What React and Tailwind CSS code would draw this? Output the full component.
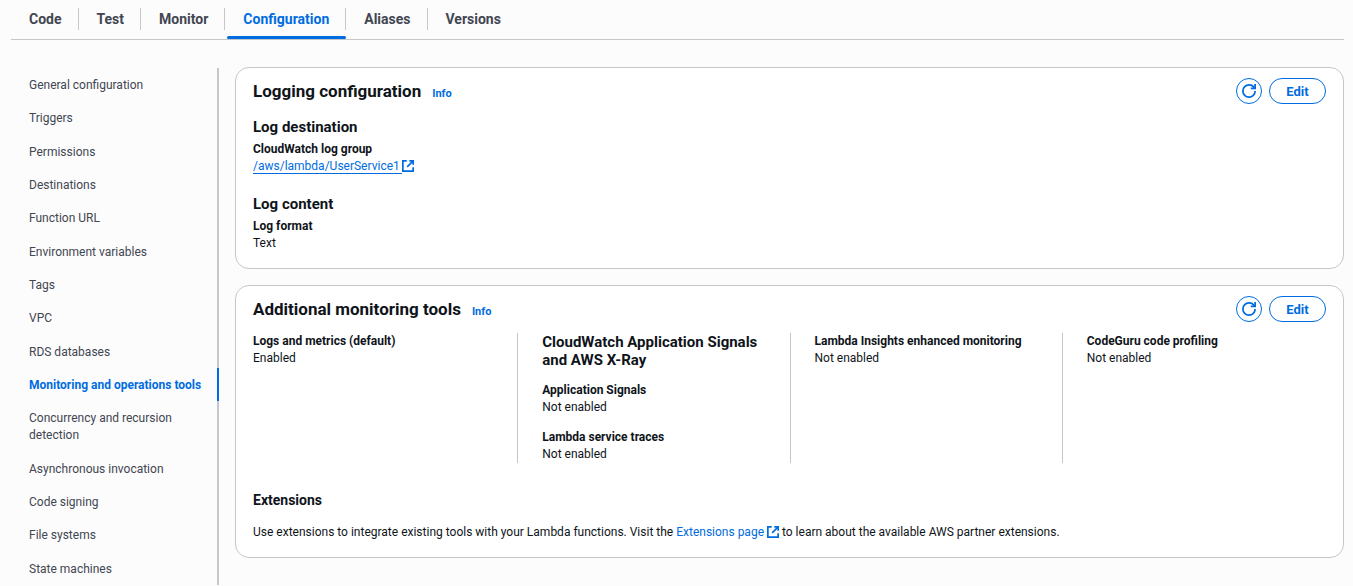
const tabs = ['Code', 'Test', 'Monitor', 'Configuration', 'Aliases', 'Versions'];

const sections = [
  'General configuration',
  'Triggers',
  'Permissions',
  'Destinations',
  'Function URL',
  'Environment variables',
  'Tags',
  'VPC',
  'RDS databases',
  'Monitoring and operations tools',
  'Concurrency and recursion detection',
  'Asynchronous invocation',
  'Code signing',
  'File systems',
  'State machines',
];

function RefreshIcon() {
  return (
    <svg viewBox="0 0 16 16" className="size-[14px]" fill="none" stroke="currentColor" strokeWidth="2" aria-hidden="true">
      <path d="M10 5h5V0" />
      <path d="M15 8a6.957 6.957 0 0 1-7 7 6.957 6.957 0 0 1-7-7 6.957 6.957 0 0 1 7-7 6.87 6.87 0 0 1 6.3 4" />
    </svg>
  );
}

function ExternalIcon() {
  return (
    <svg viewBox="1 1 14 14" className="inline size-[12px] align-[-2px]" fill="none" stroke="currentColor" strokeWidth="2" aria-hidden="true">
      <path d="M9.5 2H14v4.5" />
      <path d="m7 9 7-7" />
      <path d="M14 9.5V14H2V2h4.5" />
    </svg>
  );
}

function Tabs() {
  return (
    <div role="tablist" className="flex h-10 border-b border-[#c6c6cd]">
      {tabs.map((name) => {
        const active = name === 'Configuration';
        return (
          <div key={name} className="relative flex items-start pt-2 not-last:after:h-[22px] not-last:after:w-px not-last:after:bg-[#c6c6cd]">
            <button
              type="button"
              role="tab"
              aria-selected={active}
              className={`h-[22px] pr-4 pl-[18px] text-[14px] font-bold ${active ? 'text-[#006ce0]' : 'text-[#424650]'}`}
            >
              {name}
            </button>
            {active && <span className="absolute right-0 bottom-0 left-[2px] h-[3px] rounded-sm bg-[#006ce0]" />}
          </div>
        );
      })}
    </div>
  );
}

function SideNav() {
  return (
    <nav aria-label="Configuration sections" className="mt-px flex w-[208px] shrink-0 flex-col">
      {sections.map((name) => {
        const active = name.startsWith('Monitoring');
        return (
          <a
            key={name}
            href="#"
            className={`flex grow items-center border-r-2 pt-[9px] pr-2 pb-[7px] pl-[18px] ${
              active ? 'border-[#006ce0] font-bold whitespace-nowrap text-[#006ce0]' : 'border-[#c6c6cd] text-[#424650]'
            }`}
          >
            {name}
          </a>
        );
      })}
    </nav>
  );
}

function Card({ title, children }) {
  return (
    <section className="rounded-[14px] border border-[#c6c6cd] bg-white px-[17px] pt-[10px] pb-4">
      <header className="flex h-[26px] items-center justify-between">
        <div className="flex items-baseline gap-[11px]">
          <h2 className="text-[17px] leading-6 font-bold">{title}</h2>
          <a href="#" className="text-[11px] font-bold text-[#006ce0]">Info</a>
        </div>
        <div className="flex gap-[7px]">
          <button type="button" aria-label={`Refresh ${title}`} className="flex size-[26px] items-center justify-center rounded-full border border-[#006ce0] text-[#006ce0]">
            <RefreshIcon />
          </button>
          <button type="button" className="h-[26px] w-[57px] rounded-full border border-[#006ce0] text-[13px] font-bold text-[#006ce0]">
            Edit
          </button>
        </div>
      </header>
      {children}
    </section>
  );
}

function Field({ label, children }) {
  return (
    <dl>
      <dt className="font-bold">{label}</dt>
      <dd>{children}</dd>
    </dl>
  );
}

export default function App() {
  return (
    <div className="flex min-h-screen flex-col bg-[#fcfcfd] pr-[9px] pb-px pl-[11px] font-['Roboto',sans-serif] text-[12px] leading-[17px] text-[#0f141a]">
      <Tabs />
      <div className="mt-[27px] flex grow gap-4">
        <SideNav />
        <main className="flex min-w-0 grow flex-col gap-4">
          <Card title="Logging configuration">
            <h3 className="mt-[14px] mb-[5px] text-[15px] leading-[18px] font-bold">Log destination</h3>
            <Field label="CloudWatch log group">
              <a href="#" className="text-[#006ce0]">
                <span className="border-b border-[#006ce0] pr-[2px]">/aws/lambda/UserService1</span>
                <ExternalIcon />
              </a>
            </Field>
            <h3 className="mt-5 mb-[5px] text-[15px] leading-[18px] font-bold">Log content</h3>
            <Field label="Log format">Text</Field>
          </Card>
          <Card title="Additional monitoring tools">
            <div className="-mx-2 mt-[11px] grid grid-cols-4">
              <div className="pl-2">
                <Field label="Logs and metrics (default)">Enabled</Field>
              </div>
              <div className="flex flex-col gap-[13px] border-l border-[#c6c6cd] pr-6 pl-6">
                <h3 className="text-[15px] leading-[18px] font-bold">CloudWatch Application Signals and AWS X-Ray</h3>
                <Field label="Application Signals">Not enabled</Field>
                <Field label="Lambda service traces">Not enabled</Field>
              </div>
              <div className="border-l border-[#c6c6cd] pl-6">
                <Field label="Lambda Insights enhanced monitoring">Not enabled</Field>
              </div>
              <div className="border-l border-[#c6c6cd] pl-6">
                <Field label="CodeGuru code profiling">Not enabled</Field>
              </div>
            </div>
            <h3 className="mt-7 mb-[15px] text-[14px] leading-[18px] font-bold">Extensions</h3>
            <p>
              Use extensions to integrate existing tools with your Lambda functions. Visit the{' '}
              <a href="#" className="text-[#006ce0]">
                Extensions page <ExternalIcon />
              </a>{' '}
              to learn about the available AWS partner extensions.
            </p>
          </Card>
        </main>
      </div>
    </div>
  );
}
